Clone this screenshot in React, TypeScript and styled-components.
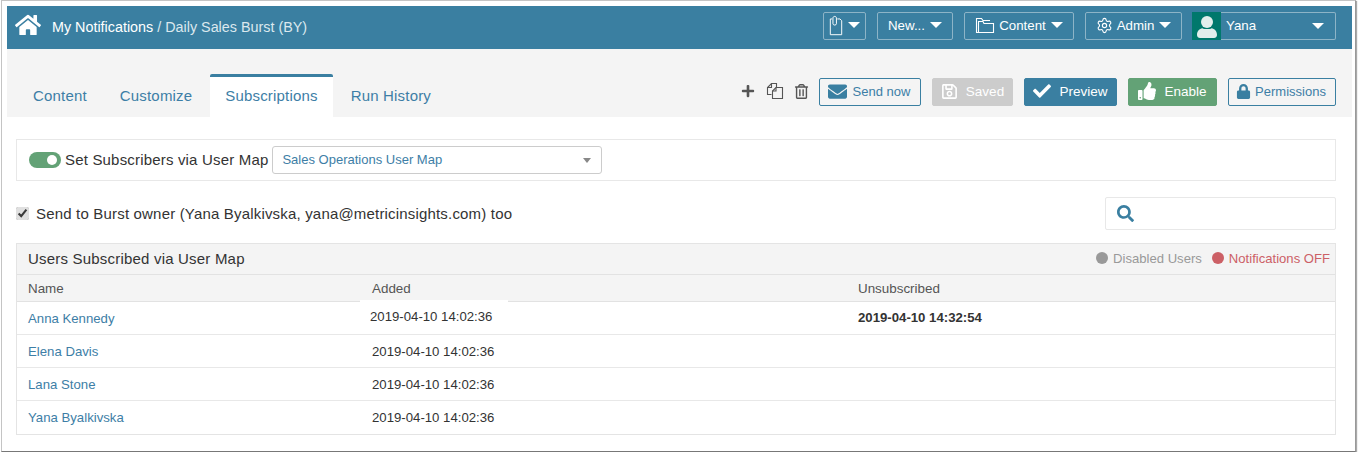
import { FC } from "react";
import styled, { createGlobalStyle } from "styled-components";
import { FaCheck, FaEnvelope, FaHome, FaLock, FaPlus, FaRegSave, FaRegTrashAlt, FaSearch, FaThumbsUp } from "react-icons/fa";
import { Settings } from "lucide-react";

const BLUE = "#3a7fa1";
const LINK = "#3d7ea6";

const GlobalStyle = createGlobalStyle`
  html, body {
    margin: 0;
    padding: 0;
    background: #fff;
    overflow: hidden;
  }
  body {
    font-family: "Liberation Sans", Arial, sans-serif;
    font-size: 14px;
    color: #333;
  }
  * {
    box-sizing: border-box;
  }
`;

const Caret = styled.span`
  display: inline-block;
  width: 0;
  height: 0;
  margin-left: 1px;
  border-left: 6px solid transparent;
  border-right: 6px solid transparent;
  border-top: 6px solid #fff;
`;

const ClipIcon = () => (
  <svg width="14" height="21" viewBox="0 0 16 24" fill="none" stroke="#fff" strokeWidth="1.1">
    <path d="M3.5 4.5H1.5V22.5H14.5V6.5L12.5 4.5H9.5" />
    <path d="M4.5 3.5C4.5 1 8.5 1 8.5 3.5V10C8.5 12 4.5 12 4.5 10Z" />
  </svg>
);

const FolderIcon = () => (
  <svg width="20" height="17" viewBox="0 0 20 17" fill="none" stroke="#fff" strokeWidth="1.1">
    <path d="M3.5 15.5H1.5V1.5H6.5L8 3.5H15" />
    <path d="M3.5 15.5V4.5H8L9 6.5H18.5V15.5Z" />
  </svg>
);

const CopyIcon = () => (
  <svg width="18" height="18" viewBox="0 0 18 18" fill="none" stroke="#555" strokeWidth="1.1">
    <path d="M5.5 12.5H1.5V5.5L5.5 1.5H10.5V5" />
    <path d="M5.5 1.5V5.5H1.5" />
    <path d="M6.5 16.5V9L10 5.5H16.5V16.5Z" />
    <path d="M10 5.5V9H6.5" />
  </svg>
);

const UserIcon = () => (
  <svg width="20" height="22" viewBox="0 0 20 22" fill="#e2eeec">
    <ellipse cx="10" cy="6" rx="6" ry="6" />
    <path d="M0 19C0 15 2.5 12.5 5.5 12.2C7 13.4 13 13.4 14.5 12.2C17.5 12.5 20 15 20 19C20 21 18.5 22 17 22H3C1.5 22 0 21 0 19Z" />
  </svg>
);

const Notifications: FC = () => (
  <Window>
    <GlobalStyle />
    <TopBar>
      <HomeLink>
        <FaHome size={26} />
      </HomeLink>
      <Crumbs>
        <strong>My Notifications</strong> / <span>Daily Sales Burst (BY)</span>
      </Crumbs>
      <TopActions>
        <TopButton $w={43}>
          <ClipIcon />
          <Caret />
        </TopButton>
        <TopButton $w={76}>
          New...
          <Caret />
        </TopButton>
        <TopButton $w={110}>
          <FolderIcon />
          Content
          <Caret />
        </TopButton>
        <TopButton $w={97}>
          <Settings size={17} strokeWidth={1.6} />
          Admin
          <Caret />
        </TopButton>
        <UserMenu>
          <Avatar>
            <UserIcon />
          </Avatar>
          <UserName>Yana</UserName>
          <Caret />
        </UserMenu>
      </TopActions>
    </TopBar>

    <TabBar>
      <Tabs>
        <Tab>Content</Tab>
        <Tab>Customize</Tab>
        <Tab $active>Subscriptions</Tab>
        <Tab>Run History</Tab>
      </Tabs>
      <Tools>
        <ToolIcon $mr={11}>
          <FaPlus size={14} color="#555" />
        </ToolIcon>
        <ToolIcon $mr={10}>
          <CopyIcon />
        </ToolIcon>
        <ToolIcon $mr={10}>
          <FaRegTrashAlt size={15} color="#555" />
        </ToolIcon>
        <ActionButton $w={102} $mr={11} $gap={6} $pr={2}>
          <FaEnvelope size={19} />
          Send now
        </ActionButton>
        <ActionButton $w={81} $mr={11} $bg="#cccccc" $filled>
          <FaRegSave size={17} />
          Saved
        </ActionButton>
        <ActionButton $w={93} $mr={11} $bg={BLUE} $filled>
          <FaCheck size={18} />
          Preview
        </ActionButton>
        <ActionButton $w={89} $mr={11} $bg="#63a276" $filled>
          <FaThumbsUp size={18} />
          Enable
        </ActionButton>
        <ActionButton $w={108} $gap={4} $pr={2}>
          <FaLock size={15} />
          Permissions
        </ActionButton>
      </Tools>
    </TabBar>

    <Content>
      <MapPanel>
        <Toggle />
        <MapLabel>Set Subscribers via User Map</MapLabel>
        <MapSelect>
          Sales Operations User Map
          <SelectCaret />
        </MapSelect>
      </MapPanel>

      <OwnerRow>
        <OwnerLabel>
          <OwnerCheck type="checkbox" defaultChecked readOnly />
          Send to Burst owner (Yana Byalkivska, yana@metricinsights.com) too
        </OwnerLabel>
        <SearchBox>
          <FaSearch size={17} color={BLUE} />
        </SearchBox>
      </OwnerRow>

      <UsersTable>
        <TableTitle>
          <h3>Users Subscribed via User Map</h3>
          <Legend $color="#999">Disabled Users</Legend>
          <Legend $color="#cc6066">Notifications OFF</Legend>
        </TableTitle>
        <HeadRow>
          <span>Name</span>
          <AddedHead>Added</AddedHead>
          <span>Unsubscribed</span>
        </HeadRow>
        <Row>
          <UserLink>Anna Kennedy</UserLink>
          <DateCell $raised>2019-04-10 14:02:36</DateCell>
          <strong>2019-04-10 14:32:54</strong>
        </Row>
        <Row>
          <UserLink>Elena Davis</UserLink>
          <DateCell>2019-04-10 14:02:36</DateCell>
        </Row>
        <Row>
          <UserLink>Lana Stone</UserLink>
          <DateCell>2019-04-10 14:02:36</DateCell>
        </Row>
        <Row>
          <UserLink>Yana Byalkivska</UserLink>
          <DateCell>2019-04-10 14:02:36</DateCell>
        </Row>
      </UsersTable>
    </Content>
  </Window>
);

const Window = styled.div`
  width: 1355px;
  height: 452px;
  margin-left: 1px;
  padding: 5px 3px 0 5px;
  background: #fff;
  border: 1px solid #c4c4c4;
  border-bottom: 1px solid #777;
  border-right: 1px solid #999;
  box-shadow: 1px 1px 1px #aaa;
  display: flex;
  flex-direction: column;
`;

const TopBar = styled.header`
  height: 43px;
  background: ${BLUE};
  display: flex;
  align-items: center;
  padding: 0 16px 0 8px;
  color: #fff;
`;

const HomeLink = styled.a`
  display: flex;
  width: 37px;
  margin-top: -5px;
`;

const Crumbs = styled.div`
  font-size: 14.35px;
  color: #dbe8ee;
  margin-top: -1px;

  strong {
    font-weight: 400;
    color: #fff;
  }
`;

const TopActions = styled.div`
  margin-left: auto;
  display: flex;
  align-items: center;
  gap: 11px;
`;

const TopButton = styled.button<{ $w: number }>`
  width: ${(p) => p.$w}px;
  height: 28px;
  margin-top: -3px;
  padding: 0 0 2px;
  display: flex;
  align-items: center;
  justify-content: center;
  gap: 4px;
  background: transparent;
  border: 1px solid #8db4c7;
  border-radius: 2px;
  color: #fff;
  font: 13.3px "Liberation Sans", Arial, sans-serif;
`;

const UserMenu = styled.div`
  width: 144px;
  height: 28px;
  margin: -3px 0 0 -1px;
  display: flex;
  align-items: center;
  border: 1px solid #8db4c7;
  border-left: 0;
  border-radius: 2px;
  padding-right: 11px;
  font-size: 13.3px;
`;

const Avatar = styled.div`
  width: 29px;
  height: 28px;
  margin-top: -1px;
  margin-bottom: -1px;
  background: #00786c;
  display: flex;
  align-items: flex-end;
  justify-content: center;
  padding-bottom: 2px;
`;

const UserName = styled.span`
  margin: -2px 0 0 5px;
  flex: 1;
`;

const TabBar = styled.div`
  height: 68px;
  background: #f4f4f4;
  display: flex;
  padding: 25px 16px 0 11px;
`;

const Tabs = styled.nav`
  display: flex;
  align-self: stretch;
  gap: 3px;
`;

const Tab = styled.a<{ $active?: boolean }>`
  height: 43px;
  padding: 10px 15px 0;
  font-size: 15px;
  letter-spacing: 0.18px;
  line-height: 17px;
  color: ${LINK};
  background: ${(p) => (p.$active ? "#fff" : "transparent")};
  border-top: 3px solid ${(p) => (p.$active ? BLUE : "transparent")};
  border-radius: 2px 2px 0 0;
`;

const Tools = styled.div`
  margin-left: auto;
  height: 28px;
  margin-top: 4px;
  display: flex;
  align-items: center;
`;

const ToolIcon = styled.span<{ $mr: number }>`
  display: flex;
  margin-top: -2px;
  margin-right: ${(p) => p.$mr}px;
`;

const ActionButton = styled.button<{
  $w: number;
  $mr?: number;
  $bg?: string;
  $filled?: boolean;
  $gap?: number;
  $pr?: number;
}>`
  width: ${(p) => p.$w}px;
  height: 28px;
  margin-right: ${(p) => p.$mr ?? 0}px;
  padding: 0 ${(p) => p.$pr ?? 0}px 2px 0;
  display: flex;
  align-items: center;
  justify-content: center;
  gap: ${(p) => p.$gap ?? 8}px;
  background: ${(p) => p.$bg ?? "transparent"};
  border: 1px solid ${(p) => p.$bg ?? BLUE};
  border-radius: 2px;
  color: ${(p) => (p.$filled ? "#fff" : LINK)};
  font: 400 ${(p) => (p.$filled ? 13.5 : 13)}px "Liberation Sans", Arial, sans-serif;

  svg {
    color: ${(p) => (p.$filled ? "#fff" : BLUE)};
    flex-shrink: 0;
  }
`;

const Content = styled.main`
  flex: 1;
  padding: 22px 16px 0 9px;
  display: flex;
  flex-direction: column;
`;

const MapPanel = styled.section`
  height: 42px;
  border: 1px solid #e8e8e8;
  display: flex;
  align-items: center;
  padding-left: 12px;
`;

const Toggle = styled.span`
  position: relative;
  width: 32px;
  height: 16px;
  border-radius: 8px;
  background: #63a276;

  &::after {
    content: "";
    position: absolute;
    top: 3px;
    right: 4px;
    width: 10px;
    height: 10px;
    border-radius: 50%;
    background: #fff;
  }
`;

const MapLabel = styled.span`
  margin: -2px 0 0 4px;
  font-size: 15px;
  letter-spacing: 0.18px;
`;

const MapSelect = styled.div`
  position: relative;
  width: 330px;
  height: 28px;
  margin-left: 4px;
  padding-left: 9px;
  line-height: 25px;
  border: 1px solid #ccc;
  border-radius: 3px;
  font-size: 13px;
  color: ${LINK};
`;

const SelectCaret = styled.i`
  position: absolute;
  top: 11px;
  right: 10px;
  width: 0;
  height: 0;
  border-left: 4px solid transparent;
  border-right: 4px solid transparent;
  border-top: 5px solid #888;
`;

const OwnerRow = styled.div`
  height: 62px;
  display: flex;
  align-items: center;
  justify-content: space-between;
`;

const OwnerLabel = styled.label`
  display: flex;
  align-items: center;
  font-size: 15px;
  letter-spacing: 0.18px;
  margin-top: 3px;
`;

const OwnerCheck = styled.input`
  width: 13px;
  height: 13px;
  margin: 0 7px 0 0;
  accent-color: #e0e0e0;
`;

const SearchBox = styled.div`
  width: 231px;
  height: 33px;
  margin-top: 3px;
  padding-left: 11px;
  display: flex;
  align-items: center;
  border: 1px solid #e8e8e8;
  border-radius: 2px;
`;

const UsersTable = styled.section`
  border: 1px solid #e4e4e4;
`;

const TableTitle = styled.div`
  height: 31px;
  background: #f4f4f4;
  border-bottom: 1px solid #e2e2e2;
  display: flex;
  align-items: center;
  padding: 0 5px 2px 11px;

  h3 {
    margin: 0 auto 0 0;
    font-size: 15px;
    letter-spacing: 0.2px;
    font-weight: 400;
  }
`;

const Legend = styled.span<{ $color: string }>`
  display: flex;
  align-items: center;
  gap: 5px;
  margin-left: 10px;
  font-size: 13.1px;
  color: ${(p) => p.$color};

  &::before {
    content: "";
    width: 12px;
    height: 12px;
    border-radius: 50%;
    background: ${(p) => p.$color};
  }
`;

const gridColumns = "344px 486px 1fr";

const HeadRow = styled.div`
  height: 27px;
  display: grid;
  grid-template-columns: ${gridColumns};
  align-items: center;
  padding: 1px 0 0 11px;
  background: #f4f4f4;
  border-bottom: 1px solid #e2e2e2;
  font-size: 13.4px;
  color: #555;
`;

const AddedHead = styled.span`
  position: relative;

  &::after {
    content: "";
    position: absolute;
    left: -12px;
    top: 19px;
    width: 148px;
    height: 2px;
    background: #fff;
  }
`;

const Row = styled.div`
  height: 33px;
  display: grid;
  grid-template-columns: ${gridColumns};
  align-items: center;
  padding: 1px 0 0 11px;
  border-bottom: 1px solid #e8e8e8;
  font-size: 13.2px;

  &:last-child {
    padding-top: 0;
    border-bottom: 0;
  }

  strong {
    margin-top: -3px;
  }
`;

const UserLink = styled.a`
  color: ${LINK};
`;

const DateCell = styled.span<{ $raised?: boolean }>`
  margin-top: ${(p) => (p.$raised ? -4 : 0)}px;
  margin-left: ${(p) => (p.$raised ? -2 : 0)}px;
`;

export default Notifications;
